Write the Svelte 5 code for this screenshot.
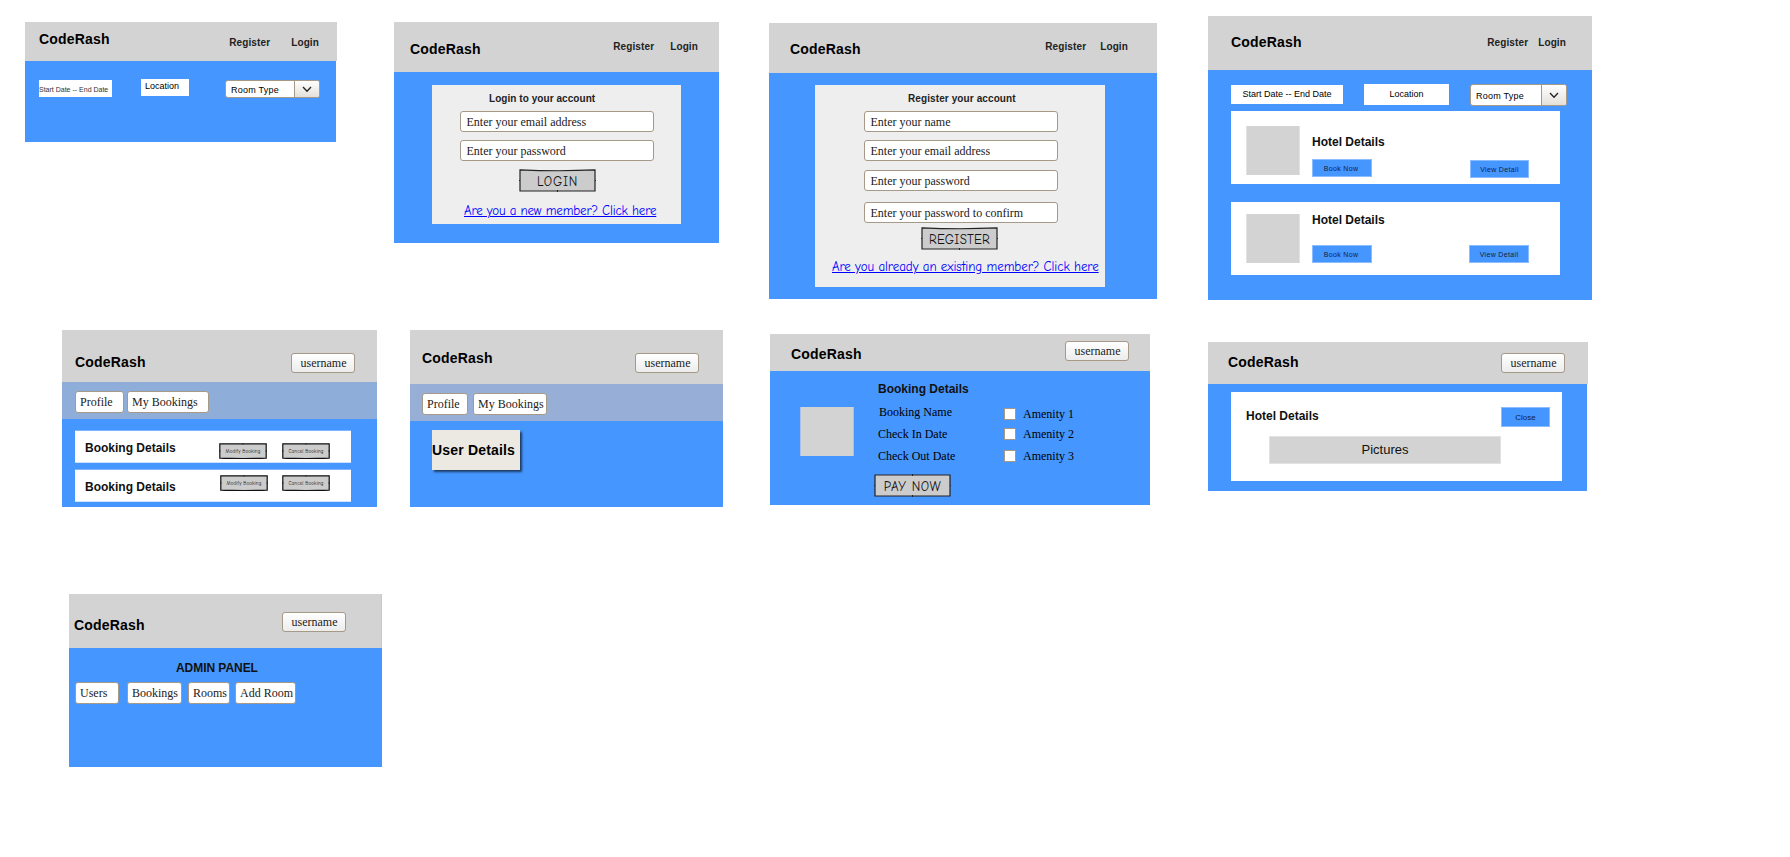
<script>
  const loginFields = ['Enter your email address', 'Enter your password'];
  const registerFields = ['Enter your name', 'Enter your email address', 'Enter your password', 'Enter your password to confirm'];
</script>

{#snippet guestHeader()}
  <header>
    <div class="brand">CodeRash</div>
    <nav><span>Register</span><span>Login</span></nav>
  </header>
{/snippet}

{#snippet userHeader()}
  <header>
    <div class="brand">CodeRash</div>
    <div class="user">username</div>
  </header>
{/snippet}

{#snippet combo()}
  <div class="combo">
    <span>Room Type</span>
    <i><svg width="10" height="7" viewBox="0 0 10 7"><path d="M1 1 L5 5.2 L9 1" fill="none" stroke="#222" stroke-width="1.3" /></svg></i>
  </div>
{/snippet}

{#snippet sketch(label, kind)}
  <div class="sketch {kind}">
    <svg viewBox="0 0 77 23">
      <path d={kind === 'pay' ? 'M1 1 H76 V22 H1 Z' : 'M1 0.8 Q38 2.6 76 0.9 V22 H1 Z'} fill="#ccc" stroke="#222" stroke-width="1.2" />
      <path d={kind === 'pay' ? 'M0 11.5 H1 M76 11.5 H77 M38.5 0 V2 M38.5 21 V23' : 'M0 11.5 H1 M76 11.5 H77 M38.5 21 V23'} stroke="#222" stroke-width="1" />
    </svg>
    <span>{label}</span>
  </div>
{/snippet}

{#snippet mini(label, kind)}
  <div class="mini {kind}">
    <svg viewBox="0 0 48 16">
      <path d="M0.8 0.8 H47.2 V15.1 Q24 16 0.8 15.1 Z" fill="#ccc" stroke="#111" stroke-width="1.2" />
      <path d="M0 8 H2 M46 8 H48 M24 0 V2" stroke="#222" stroke-width="0.6" />
    </svg>
    <span>{label}</span>
  </div>
{/snippet}

<main>
  <section class="frame search">
    {@render guestHeader()}
    <div class="body filters">
      <div class="box dates">Start Date -- End Date</div>
      <div class="box place">Location</div>
      {@render combo()}
    </div>
  </section>

  <section class="frame login">
    {@render guestHeader()}
    <div class="body">
      <div class="panel">
        <h3>Login to your account</h3>
        {#each loginFields as f}<div class="field">{f}</div>{/each}
        {@render sketch('LOGIN', 'go')}
        <div class="link"><span>Are you a new member? Click here</span></div>
      </div>
    </div>
  </section>

  <section class="frame register">
    {@render guestHeader()}
    <div class="body">
      <div class="panel">
        <h3>Register your account</h3>
        {#each registerFields as f}<div class="field">{f}</div>{/each}
        {@render sketch('REGISTER', 'go')}
        <div class="link"><span>Are you already an existing member? Click here</span></div>
      </div>
    </div>
  </section>

  <section class="frame hotels">
    {@render guestHeader()}
    <div class="body">
      <div class="filters">
        <div class="box dates">Start Date -- End Date</div>
        <div class="box place">Location</div>
        {@render combo()}
      </div>
      {#each ['first', 'second'] as k}
        <div class="card {k}">
          <div class="thumb"></div>
          <div class="info">
            <h2>Hotel Details</h2>
            <div class="btn">Book Now</div>
          </div>
          <div class="btn view">View Detail</div>
        </div>
      {/each}
    </div>
  </section>

  <section class="frame bookings">
    {@render userHeader()}
    <div class="strip"><div class="chip profile">Profile</div><div class="chip mine">My Bookings</div></div>
    <div class="body">
      {#each ['first', 'second'] as k}
        <div class="row {k}">
          <h2>Booking Details</h2>
          {@render mini('Modify Booking', 'modify')}
          {@render mini('Cancel Booking', 'cancel')}
        </div>
      {/each}
    </div>
  </section>

  <section class="frame account">
    {@render userHeader()}
    <div class="strip"><div class="chip profile">Profile</div><div class="chip mine">My Bookings</div></div>
    <div class="body"><div class="note">User Details</div></div>
  </section>

  <section class="frame payment">
    {@render userHeader()}
    <div class="body">
      <div class="thumb"></div>
      <div class="facts">
        <h2>Booking Details</h2>
        <p class="name">Booking Name</p>
        <p>Check In Date</p>
        <p>Check Out Date</p>
        {@render sketch('PAY NOW', 'pay')}
      </div>
      <div class="amenities">
        {#each [1, 2, 3] as n}<div class="amenity"><i></i><span>Amenity {n}</span></div>{/each}
      </div>
    </div>
  </section>

  <section class="frame detail">
    {@render userHeader()}
    <div class="body">
      <div class="sheet">
        <div class="top"><h2>Hotel Details</h2><div class="btn close">Close</div></div>
        <div class="pictures">Pictures</div>
      </div>
    </div>
  </section>

  <section class="frame admin">
    {@render userHeader()}
    <div class="body">
      <h2>ADMIN PANEL</h2>
      <div class="chips">
        <div class="chip users">Users</div>
        <div class="chip books">Bookings</div>
        <div class="chip rooms">Rooms</div>
        <div class="chip add">Add Room</div>
      </div>
    </div>
  </section>
</main>

<style>
  :global(body) { margin: 0; background: #fff; }
  main { position: relative; width: 1790px; height: 857px; overflow: hidden; font-family: "Liberation Sans", Arial, sans-serif; color: #000; }
  main * { box-sizing: border-box; }
  h2, h3, p { margin: 0; white-space: nowrap; }

  /* Wireframes placed on the canvas */
  .frame { position: absolute; display: flex; flex-direction: column; white-space: nowrap; }
  .search { left: 25px; top: 22px; width: 312px; height: 120px; --hh: 39px; --bx: 14px; --by: 9px; --ny: 15px; --nr: 18px; --gap: 21px; }
  .login { left: 394px; top: 22px; width: 325px; height: 221px; --hh: 50px; --bx: 16px; --by: 19px; --ny: 19px; --nr: 21px; --gap: 16px; }
  .register { left: 769px; top: 23px; width: 388px; height: 276px; --hh: 50px; --bx: 21px; --by: 18px; --ny: 18px; --nr: 29px; --gap: 14px; }
  .hotels { left: 1208px; top: 16px; width: 384px; height: 284px; --hh: 54px; --bx: 23px; --by: 18px; --ny: 21px; --nr: 26px; --gap: 10px; }
  .bookings { left: 62px; top: 330px; width: 315px; height: 177px; --hh: 52px; --bx: 13px; --by: 24px; --ny: 23px; --nr: 22px; }
  .account { left: 410px; top: 330px; width: 313px; height: 177px; --hh: 54px; --bx: 12px; --by: 20px; --ny: 23px; --nr: 24px; }
  .payment { left: 770px; top: 334px; width: 380px; height: 171px; --hh: 37px; --bx: 21px; --by: 12px; --ny: 7px; --nr: 21px; }
  .detail { left: 1208px; top: 342px; width: 380px; height: 149px; --hh: 42px; --bx: 20px; --by: 12px; --ny: 11px; --nr: 23px; }
  .admin { left: 69px; top: 594px; width: 313px; height: 173px; --hh: 54px; --bx: 5px; --by: 23px; --ny: 18px; --nr: 35px; }

  header { flex: 0 0 var(--hh); display: flex; justify-content: space-between; align-items: flex-start; background: #d3d3d3; }
  .body { flex: 1; min-height: 0; background: #4696ff; }
  .search .body, .detail .body { margin-right: 1px; }
  .brand { margin: var(--by) 0 0 var(--bx); font: bold 14px/16px "Liberation Sans", Arial, sans-serif; letter-spacing: 0.2px; }
  nav { display: flex; gap: var(--gap); margin: var(--ny) var(--nr) 0 0; font-weight: bold; font-size: 10px; line-height: 11px; letter-spacing: 0.12px; color: #222; }
  .user { width: 64px; height: 20px; margin: var(--ny) var(--nr) 0 0; border: 1px solid #a69988; border-radius: 3px; background: linear-gradient(#fff, #ececec); font: 12px/18px "Liberation Serif", "Times New Roman", serif; text-align: center; padding-left: 1px; color: #222; }
  h2 { font-size: 12px; line-height: 14px; font-weight: bold; color: #111; }

  /* Search filters */
  .filters { display: flex; align-items: flex-start; }
  .box { background: #fff; text-align: center; font-size: 9px; }
  .search .dates { width: 73px; height: 17px; margin: 19px 0 0 14px; font-size: 7px; line-height: 19px; text-align: left; color: #333; }
  .search .place { width: 48px; height: 17px; margin: 18px 0 0 29px; line-height: 14px; padding-left: 4px; text-align: left; }
  .combo { display: flex; justify-content: space-between; border: 1px solid #a69988; border-radius: 3px; background: #fff; font-size: 9px; letter-spacing: 0.24px; overflow: hidden; }
  .combo span { padding-left: 5px; }
  .combo i { display: flex; align-items: center; justify-content: center; width: 25px; border-left: 1px solid #a69988; background: linear-gradient(#fff, #e4e1da); }
  .search .combo { width: 95px; height: 18px; margin: 19px 0 0 36px; line-height: 18px; }
  .hotels .filters { height: 41px; }
  .hotels .dates { width: 112px; height: 19px; margin: 15px 0 0 23px; line-height: 18px; }
  .hotels .place { width: 85px; height: 21px; margin: 14px 0 0 21px; line-height: 20px; }
  .hotels .combo { width: 97px; height: 22px; margin: 14px 0 0 21px; line-height: 22px; }

  /* Sign-in and sign-up panels */
  .panel { display: flex; flex-direction: column; align-items: flex-start; background: #eee; }
  .login .panel { width: 249px; height: 139px; margin: 13px 0 0 38px; }
  .register .panel { width: 290px; height: 202px; margin: 12px 0 0 46px; }
  h3 { height: 18px; margin: 8px 0 0 57px; font-size: 10px; line-height: 11px; color: #222; letter-spacing: 0.06px; }
  .register h3 { margin-left: 93px; letter-spacing: 0.1px; }
  .field { width: 194px; height: 21px; margin: 0 0 8px 28px; padding-left: 5.5px; border: 1px solid #a69988; border-radius: 3px; background: #fff; font: 12px/20px "Liberation Serif", "Times New Roman", serif; color: #222; }
  .register .field { margin-left: 49px; }
  .register .field:nth-child(3) { margin-bottom: 9px; }
  .register .field:nth-child(4) { margin-bottom: 11px; }
  .register .field:nth-child(5) { margin-bottom: 4px; }
  .sketch { display: grid; width: 77px; height: 23px; font: 13px/26px "Comic Sans MS", "Comic Neue", "Noto Sans", sans-serif; text-align: center; color: #111; }
  .sketch > *, .mini > * { grid-area: 1 / 1; }
  .sketch svg { width: 77px; height: 23px; }
  .login .go { margin-left: 87px; letter-spacing: 0.7px; }
  .register .go { margin-left: 106px; letter-spacing: 0.2px; }
  .link { margin-top: 10px; font: 13px/18px "Comic Sans MS", "Comic Neue", "Noto Sans", sans-serif; color: #00f; text-decoration: underline; text-underline-offset: 1px; }
  .register .link { margin-top: 8px; }
  .login .link { margin-left: 32px; letter-spacing: -0.14px; }
  .register .link { margin-left: 17px; letter-spacing: -0.05px; }

  /* Hotel results */
  .card { display: flex; align-items: flex-start; width: 329px; height: 73px; margin-left: 23px; background: #fff; }
  .card.second { margin-top: 18px; }
  .thumb { width: 54px; height: 49px; background: #d3d3d3; border: solid #e2e2e2; border-width: 0 1px; }
  .card .thumb { margin: 15px 0 0 15px; }
  .card.second .thumb { margin-top: 12px; }
  .info { width: 74px; margin: 24px 0 0 12px; }
  .second .info { margin-top: 11px; }
  .info .btn { margin-top: 10px; }
  .second .info .btn { margin-top: 18px; }
  .btn { width: 60px; height: 18px; background: #4696ff; border: 1px solid #8abcff; font-size: 7px; line-height: 18px; letter-spacing: 0.35px; text-align: center; color: #10233f; }
  .info .btn { padding-right: 2px; }
  .view { margin: 49px 0 0 84px; width: 59px; }
  .second .view { margin: 43px 0 0 83px; width: 60px; }

  /* Tab strip */
  .strip { flex: 0 0 37px; display: flex; align-items: flex-start; background: #8eadd8; }
  .chip { height: 22px; padding-left: 4px; border: 1px solid #a69988; border-radius: 3px; background: #fff; font: 12px/20px "Liberation Serif", "Times New Roman", serif; color: #222; }
  .bookings .profile { width: 49px; margin: 9px 0 0 13px; }
  .bookings .mine { width: 82px; margin: 9px 0 0 3px; }
  .account .strip { background: #97afd6; }
  .account .profile { width: 46px; margin: 9px 0 0 12px; }
  .account .mine { width: 74px; margin: 9px 0 0 5px; }

  .row { display: flex; align-items: flex-start; width: 276px; height: 33px; margin: 11px 0 0 13px; background: #fff; border: solid; border-width: 1px 0; border-color: #7fb5ff transparent #cfe3ff; }
  .row.second { margin-top: 6px; }
  .row h2 { width: 134px; margin: 10px 0 0 10px; }
  .row.second h2 { width: 135px; }
  .mini { display: grid; width: 48px; height: 16px; margin-top: 12px; text-align: center; font: 5px/17px "Comic Sans MS", "Comic Neue", "Noto Sans", sans-serif; letter-spacing: 0.12px; color: #111; }
  .second .mini { margin-top: 5px; }
  .mini svg { width: 48px; height: 16px; }
  .cancel { margin-left: 15px; }
  .second .cancel { margin-left: 14px; }

  .note { width: 88px; height: 40px; margin: 9px 0 0 22px; background: #ece9e2; box-shadow: 2px 2px 2px rgba(0, 0, 0, 0.6); font: bold 14px/40px "Liberation Sans", Arial, sans-serif; letter-spacing: 0.18px; }

  /* Payment */
  .payment .body { display: flex; align-items: flex-start; }
  .payment .thumb { margin: 36px 0 0 30px; border-color: #a9c1e6; }
  .facts { width: 150px; margin: 11px 0 0 24px; }
  p { font: 12px/14px "Liberation Serif", "Times New Roman", serif; margin-bottom: 8px; }
  p.name { margin: 9px 0 8px 1px; }
  .facts h2 { margin-bottom: 9px; }
  .pay { margin: 11px 0 0 -4px; letter-spacing: 0.6px; }
  .amenities { margin-top: 36px; }
  .amenity { display: flex; align-items: center; height: 14px; margin-bottom: 6px; font: 12px/14px "Liberation Serif", "Times New Roman", serif; }
  .amenity:nth-child(2) { margin-bottom: 8px; }
  .amenity i { width: 12px; height: 12px; margin: 0 7px 0 -24px; border: 1px solid #a69988; background: #fff; }

  /* Hotel detail */
  .sheet { width: 331px; height: 89px; margin: 8px 0 0 23px; background: #fff; }
  .top { display: flex; align-items: flex-start; justify-content: space-between; height: 44px; padding: 15px 12px 0 15px; }
  .top h2 { margin-top: 2px; }
  .close { width: 49px; height: 20px; font-size: 8px; line-height: 19px; letter-spacing: 0; }
  .pictures { width: 232px; height: 28px; margin-left: 38px; border: 1px solid #e2e2e2; background: #d3d3d3; font-size: 13px; line-height: 26px; text-align: center; color: #111; }

  /* Admin */
  .admin .body { padding: 13px 0 0 6px; }
  .admin header { border-right: 1px solid #b9cbe0; }
  .admin h2 { margin-left: 101px; letter-spacing: -0.05px; }
  .chips { display: flex; margin-top: 7px; }
  .users { width: 44px; }
  .books { width: 55px; margin-left: 8px; }
  .rooms { width: 42px; margin-left: 6px; }
  .add { width: 61px; margin-left: 5px; }
</style>
